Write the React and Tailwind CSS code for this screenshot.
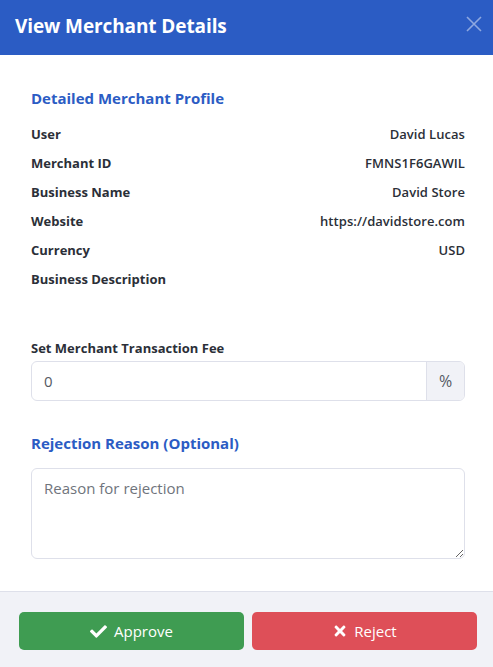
import { FaCheck, FaTimes } from "react-icons/fa";

const details = [
  ["User", "David Lucas"],
  ["Merchant ID", "FMNS1F6GAWIL"],
  ["Business Name", "David Store"],
  ["Website", "https://davidstore.com"],
  ["Currency", "USD"],
  ["Business Description", ""],
];

export default function App() {
  return (
    <div className="flex flex-col h-[667px] bg-white font-['Open_Sans','Noto_Sans',sans-serif] text-[#2b2f38] overflow-hidden">
      {/* Header */}
      <div className="flex items-center justify-between h-[55px] bg-[#2b5cc4] pl-[15px] pr-[10px] pb-[2px]">
        <h1 className="text-[19px] font-bold text-white tracking-[-0.1px]">View Merchant Details</h1>
        <svg width="18" height="18" viewBox="0 0 18 18" className="mt-[-5px]">
          <path d="M2 2 L16 16 M16 2 L2 16" stroke="#8ea8e0" strokeWidth="1.6" fill="none" />
        </svg>
      </div>

      {/* Body */}
      <div className="flex-1 pl-[31px] pr-[28px] pt-[33px]">
        <h2 className="text-[15px] leading-[20px] font-bold text-[#2b5cc4]">Detailed Merchant Profile</h2>
        <div className="flex flex-col mt-[12px]">
          {details.map(([label, value]) => (
            <div key={label} className="flex justify-between items-center h-[29px] text-[13px]">
              <span className="font-bold">{label}</span>
              <span className="font-semibold tracking-[0.05px]">{value}</span>
            </div>
          ))}
        </div>

        <label className="block mt-[44px] text-[13px] leading-[20px] font-bold">Set Merchant Transaction Fee</label>
        <div className="flex h-[40px] mt-[3px] rounded-[6px] border border-[#dee0ea] overflow-hidden">
          <div className="flex flex-1 items-center pl-[12px] text-[15px] text-[#555a64]">0</div>
          <div className="flex items-center justify-center w-[38px] bg-[#f1f2f7] border-l border-[#dee0ea] text-[16px] text-[#555a64]">%</div>
        </div>

        <h2 className="mt-[32px] text-[15px] leading-[20px] font-bold text-[#2b5cc4]">Rejection Reason (Optional)</h2>
        <textarea
          readOnly
          placeholder="Reason for rejection"
          className="block w-full h-[91px] mt-[15px] px-[12px] py-[8px] rounded-[6px] border border-[#dee0ea] text-[15px] placeholder:text-[#6f747c] outline-none"
        />
      </div>

      {/* Footer */}
      <div className="flex gap-2 h-[76px] pl-[19px] pr-[16px] pt-[20px] bg-[#f1f2f7] border-t border-[#dee0ea]">
        <button className="flex flex-1 items-center justify-center gap-[7px] h-[38px] rounded-[5px] bg-[#3f9c52] text-white text-[15px]">
          <FaCheck className="text-[17px]" /> Approve
        </button>
        <button className="flex flex-1 items-center justify-center gap-[6px] h-[38px] rounded-[5px] bg-[#de4f58] text-white text-[15px]">
          <FaTimes className="text-[16px]" /> Reject
        </button>
      </div>
    </div>
  );
}
